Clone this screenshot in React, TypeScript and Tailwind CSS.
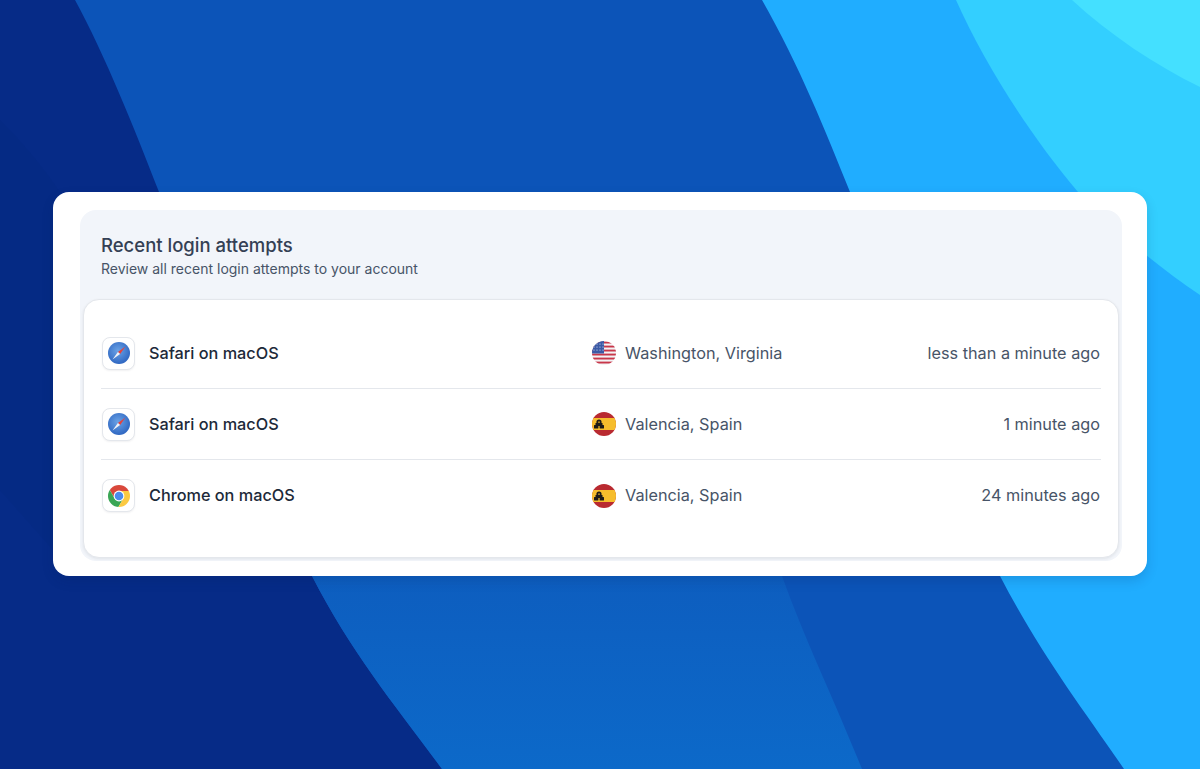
function Background() {
  return (
    <svg
      className="absolute inset-0 h-full w-full"
      viewBox="0 0 1200 769"
      preserveAspectRatio="none"
    >
      <defs>
        <linearGradient id="band" x1="0" y1="0" x2="0" y2="1">
          <stop offset="0" stopColor="#0e59bb" />
          <stop offset="1" stopColor="#0c69c9" />
        </linearGradient>
      </defs>
      <rect width="1200" height="769" fill="#062b87" />
      <path d="M0 120 C25 145 45 170 62 195 L62 560 L0 490 Z" fill="#052a84" />
      <path
        d="M75 0 C105 55 135 130 159 192 C205 311 255 465 312 576 C352 654 395 705 442 769 L1200 769 L1200 0 Z"
        fill="#0c54b8"
      />
      <path
        d="M312 576 C352 654 395 705 442 769 L862 769 C830 690 805 640 782 576 L782 500 L312 500 Z"
        fill="url(#band)"
      />
      <path
        d="M762 0 C800 67 825 130 850 192 C890 300 945 470 1000 576 C1040 653 1080 705 1124 769 L1200 769 L1200 0 Z"
        fill="#20adff"
      />
      <path
        d="M956 0 C985 65 1030 135 1078 192 C1115 232 1160 268 1200 295 L1200 0 Z"
        fill="#33cfff"
      />
      <path d="M1072 0 C1110 35 1155 65 1200 87 L1200 0 Z" fill="#44e0ff" />
    </svg>
  );
}

function SafariIcon() {
  return (
    <svg viewBox="0 0 24 24" className="h-6 w-6">
      <defs>
        <radialGradient id="safari" cx="0.45" cy="0.4" r="0.65">
          <stop offset="0" stopColor="#6ba3e6" />
          <stop offset="1" stopColor="#2a62bf" />
        </radialGradient>
      </defs>
      <circle cx="12" cy="12" r="11" fill="url(#safari)" />
      <polygon points="18.5,5.5 10.9,10.9 13.1,13.1" fill="#e5423d" />
      <polygon points="5.5,18.5 10.9,10.9 13.1,13.1" fill="#f0f2f7" />
    </svg>
  );
}

function ChromeIcon() {
  const wedge = "12,12 12,7 40,7 40,-40 -7.33,-40 -7.33,-11.5 7.67,14.5";
  return (
    <svg viewBox="0 0 24 24" className="h-6 w-6">
      <defs>
        <clipPath id="chrome-clip">
          <circle cx="12" cy="12" r="11" />
        </clipPath>
      </defs>
      <g clipPath="url(#chrome-clip)">
        <polygon points={wedge} fill="#d9483b" />
        <polygon points={wedge} fill="#3aa655" transform="rotate(-120 12 12)" />
        <polygon points={wedge} fill="#fbc942" transform="rotate(120 12 12)" />
      </g>
      <circle cx="12" cy="12" r="5.4" fill="#fff" />
      <circle cx="12" cy="12" r="4.3" fill="#4b8bec" />
    </svg>
  );
}

function UsFlag() {
  const stripes = [0, 4, 8, 12, 16, 20];
  const stars = [2, 5, 8, 11];
  return (
    <svg viewBox="0 0 24 24" className="h-6 w-6 shrink-0">
      <defs>
        <clipPath id="us-clip">
          <circle cx="12" cy="12" r="12" />
        </clipPath>
      </defs>
      <g clipPath="url(#us-clip)">
        <rect width="24" height="24" fill="#f3f3f5" />
        {stripes.map((y) => (
          <rect key={y} y={y + 0.6} width="24" height="1.9" fill="#c8374a" />
        ))}
        <rect width="12" height="12.5" fill="#3b5aa6" />
        {stars.map((x) =>
          [3, 6, 9].map((y) => (
            <circle key={`${x}-${y}`} cx={x} cy={y} r="0.6" fill="#dfe5f5" />
          )),
        )}
      </g>
    </svg>
  );
}

function EsFlag({ id }: { id: string }) {
  return (
    <svg viewBox="0 0 24 24" className="h-6 w-6 shrink-0">
      <defs>
        <clipPath id={id}>
          <circle cx="12" cy="12" r="12" />
        </clipPath>
      </defs>
      <g clipPath={`url(#${id})`}>
        <rect width="24" height="24" fill="#b92a30" />
        <rect y="6" width="24" height="12" fill="#f6bd2c" />
        <circle cx="7" cy="10" r="2.6" fill="#1d1a17" />
        <rect x="3.5" y="11" width="7" height="3" fill="#1d1a17" />
        <rect x="2" y="13" width="4.4" height="3.6" rx="0.6" fill="#1d1a17" />
        <rect x="7.6" y="13" width="4.4" height="3.6" rx="0.6" fill="#1d1a17" />
        <rect x="6.4" y="9.4" width="1.2" height="1.6" fill="#f6bd2c" />
      </g>
    </svg>
  );
}

function LoginRow({
  browser,
  icon,
  flag,
  place,
  time,
  last,
}: {
  browser: string;
  icon: React.ReactNode;
  flag: React.ReactNode;
  place: string;
  time: string;
  last?: boolean;
}) {
  return (
    <div
      className={`flex h-[71px] items-center ${
        last ? "" : "border-b border-[#e4e7ec]"
      }`}
    >
      <div className="flex w-[491px] items-center gap-[14px]">
        <div className="ml-px flex h-[33px] w-[33px] items-center justify-center rounded-lg border border-[#e4e7ec] bg-white shadow-[0_1px_2px_rgba(16,24,40,0.06)]">
          {icon}
        </div>
        <span className="text-[16.25px] font-medium text-[#1d2939]">
          {browser}
        </span>
      </div>
      <div className="flex items-center gap-[9px]">
        {flag}
        <span className="text-[16.25px] text-[#475467]">{place}</span>
      </div>
      <span className="mr-px ml-auto text-[16.25px] text-[#475467]">
        {time}
      </span>
    </div>
  );
}

export default function App() {
  return (
    <div className="relative flex h-[769px] w-full justify-center overflow-hidden pt-[192px] font-['Inter',sans-serif]">
      <Background />
      <div className="relative h-[384px] w-[1094px] rounded-2xl bg-white pt-[18px] pr-[25px] pl-[27px] shadow-[0_5px_12px_rgba(6,30,90,0.16)]">
        <div className="flex h-[351px] flex-col rounded-2xl bg-[#f2f5fa] p-[3px]">
          <div className="h-[86px] shrink-0 px-[18px] pt-[19px]">
            <h2 className="text-[18.5px] leading-[26px] font-medium text-[#344054]">
              Recent login attempts
            </h2>
            <p className="mt-px text-sm leading-[20px] text-[#475467]">
              Review all recent login attempts to your account
            </p>
          </div>
          <div className="h-[259px] shrink-0 rounded-2xl border border-[#e4e7ec] bg-white pt-[18px] pr-[17px] pl-[17px] shadow-[0_1px_3px_rgba(16,24,40,0.08)]">
            <LoginRow
              browser="Safari on macOS"
              icon={<SafariIcon />}
              flag={<UsFlag />}
              place="Washington, Virginia"
              time="less than a minute ago"
            />
            <LoginRow
              browser="Safari on macOS"
              icon={<SafariIcon />}
              flag={<EsFlag id="es-1" />}
              place="Valencia, Spain"
              time="1 minute ago"
            />
            <LoginRow
              browser="Chrome on macOS"
              icon={<ChromeIcon />}
              flag={<EsFlag id="es-2" />}
              place="Valencia, Spain"
              time="24 minutes ago"
              last
            />
          </div>
        </div>
      </div>
    </div>
  );
}
